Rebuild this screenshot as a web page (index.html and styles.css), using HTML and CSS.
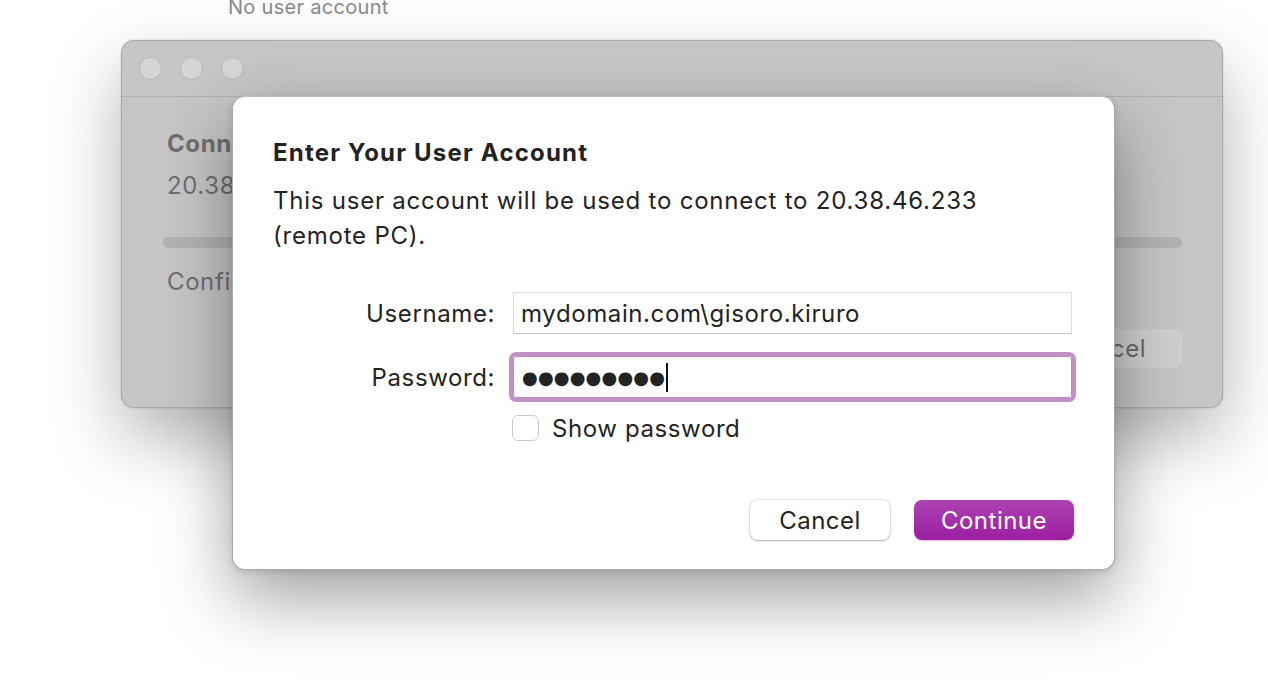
FILE: index.html
```html
<!DOCTYPE html>
<html>
<head>
<meta charset="utf-8">
<link rel="stylesheet" href="styles.css">
</head>
<body>
<div class="stage">
  <div class="caption">No user account</div>

  <div class="window">
    <div class="titlebar">
      <span class="light"></span><span class="light"></span><span class="light"></span>
    </div>
    <div class="win-body">
      <div class="win-title">Connecting</div>
      <div class="win-sub">20.38.46.233</div>
      <div class="progress"></div>
      <div class="win-status">Configuring remote PC...</div>
      <div class="win-actions"><span class="win-btn">Cancel</span></div>
    </div>
  </div>

  <div class="dialog">
    <h1 class="dlg-title">Enter Your User Account</h1>
    <p class="dlg-text">This user account will be used to connect to 20.38.46.233 (remote PC).</p>
    <div class="form">
      <label class="lbl">Username:</label>
      <div class="field">mydomain.com\gisoro.kiruro</div>
      <label class="lbl">Password:</label>
      <div class="field focus"><span class="dots">●●●●●●●●●</span><span class="caret"></span></div>
      <span></span>
      <div class="check-row"><span class="checkbox"></span><span>Show password</span></div>
    </div>
    <div class="actions">
      <button class="btn">Cancel</button>
      <button class="btn primary">Continue</button>
    </div>
  </div>
</div>
</body>
</html>
```

FILE: styles.css
```css
html, body {
  margin: 0;
  padding: 0;
  background: #ffffff;
}
body {
  font-family: Inter, "Noto Sans", "Liberation Sans", sans-serif;
  color: #232323;
}
.stage {
  position: relative;
  width: 1268px;
  height: 694px;
  overflow: hidden;
  background: #ffffff;
}
.caption {
  position: absolute;
  left: 228px;
  top: -5px;
  font-size: 20px;
  letter-spacing: 0.3px;
  color: #8a8a8a;
  line-height: 24px;
}
.window {
  position: absolute;
  left: 121px;
  top: 40px;
  width: 1100px;
  height: 366px;
  background: #c6c6c6;
  border: 1px solid #aaaaaa;
  border-radius: 13px;
  box-shadow: 0 30px 70px rgba(0,0,0,0.30), 0 0 2px rgba(0,0,0,0.2);
  display: flex;
  flex-direction: column;
}
.titlebar {
  height: 55px;
  border-bottom: 1px solid #b2b2b2;
  display: flex;
  align-items: center;
  gap: 18px;
  padding-left: 17px;
}
.light {
  width: 21px;
  height: 21px;
  border-radius: 50%;
  background: #d6d6d6;
  border: 1px solid #b8b8b8;
}
.win-body {
  padding: 33px 40px 0 45px;
  display: flex;
  flex-direction: column;
  color: #6f6f6f;
  font-size: 24px;
  letter-spacing: 0.6px;
}
.win-title {
  font-weight: 700;
  line-height: 28px;
}
.win-sub {
  margin-top: 14px;
  line-height: 28px;
}
.progress {
  margin: 37px 0 0 -4px;
  height: 11px;
  border-radius: 6px;
  background: #b3b3b3;
}
.win-status {
  margin-top: 20px;
  line-height: 28px;
}
.win-actions {
  display: flex;
  justify-content: flex-end;
  margin-top: 33px;
}
.win-btn {
  width: 154px;
  height: 39px;
  border-radius: 8px;
  background: #cfcfcf;
  display: flex;
  align-items: center;
  justify-content: center;
  color: #6a6a6a;
}
.dialog {
  position: absolute;
  left: 232px;
  top: 96px;
  width: 801px;
  height: 472px;
  padding: 0 40px 0 40px;
  background: #ffffff;
  border: 1px solid #a9a9a9;
  border-top-color: #bcbcbc;
  border-radius: 13px;
  box-shadow: 0 28px 70px rgba(0,0,0,0.38), 0 2px 6px rgba(0,0,0,0.12);
  display: flex;
  flex-direction: column;
  font-size: 24px;
  letter-spacing: 0.6px;
}
.dlg-title {
  margin: 41px 0 0;
  font-size: 24px;
  font-weight: 700;
  letter-spacing: 1.2px;
  line-height: 30px;
  color: #232323;
}
.dlg-text {
  margin: 15px 0 0;
  font-size: 24px;
  letter-spacing: 0.78px;
  line-height: 35px;
  color: #232323;
  width: 730px;
}
.form {
  margin-top: 39px;
  display: grid;
  grid-template-columns: 222px 559px;
  column-gap: 18px;
  row-gap: 22px;
  align-items: center;
}
.lbl {
  text-align: right;
  color: #232323;
}
.field {
  height: 42px;
  box-sizing: border-box;
  border: 1px solid #dcdcdc;
  border-bottom-color: #c4c4c4;
  padding: 0 7px;
  display: flex;
  align-items: center;
  color: #232323;
}
.field.focus {
  outline: 4px solid #c190c4;
  outline-offset: 0;
  border-radius: 3px;
  border-color: #b78bbb;
}
.dots {
  font-family: "DejaVu Sans", sans-serif;
  font-size: 18px;
  letter-spacing: 0.2px;
  color: #232323;
  margin-left: 1px;
}
.caret {
  width: 2px;
  height: 29px;
  background: #111;
  margin-left: 1px;
}
.check-row {
  display: flex;
  align-items: center;
  gap: 13px;
  height: 26px;
  margin-top: -5px;
  color: #232323;
}
.checkbox {
  width: 27px;
  height: 26px;
  box-sizing: border-box;
  border: 1px solid #c9c9c9;
  border-radius: 6px;
  background: #fff;
  margin-left: -1px;
}
.actions {
  margin-top: auto;
  margin-bottom: 29px;
  display: flex;
  justify-content: flex-end;
  gap: 24px;
}
.btn {
  font-family: Inter, "Noto Sans", "Liberation Sans", sans-serif;
  font-size: 24px;
  letter-spacing: 0.5px;
  height: 40px;
  width: 140px;
  border: none;
  border-radius: 8px;
  background: #ffffff;
  color: #232323;
  box-shadow: 0 0 0 1px rgba(0,0,0,0.09), 0 1px 2px rgba(0,0,0,0.25);
  padding: 0;
}
.btn.primary {
  width: 160px;
  color: #ffffff;
  background: linear-gradient(#ad43b4, #9b1ea0);
  box-shadow: 0 1px 2px rgba(150,30,160,0.3);
}
```
